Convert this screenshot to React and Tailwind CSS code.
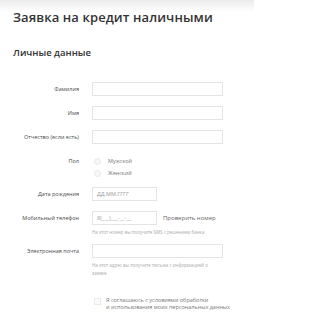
import React from "react";

const Field = ({ label, children, className = "" }) => (
  <div className={`flex ${className}`}>
    <div className="w-[79px] shrink-0 text-right text-[5.5px] leading-[14px] text-[#4a4a4a]">
      {label}
    </div>
    <div className="ml-[13px] flex-1">{children}</div>
  </div>
);

const Input = ({ w = "w-[131px]", placeholder }) => (
  <div
    className={`${w} h-[14px] border border-[#e4e4e4] bg-white px-[4px] text-[5.5px] leading-[12px] text-[#999]`}
  >
    {placeholder}
  </div>
);

const Radio = ({ label }) => (
  <div className="flex items-center h-[12px]">
    <span className="w-[7px] h-[7px] rounded-full border border-[#e8e8e8] bg-[#f7f7f7]" />
    <span className="ml-[7px] text-[5.5px] text-[#777]">{label}</span>
  </div>
);

export default function App() {
  return (
    <div
      className="w-[254px] h-[320px] overflow-hidden bg-[linear-gradient(to_bottom,#ebebeb_0px,#ffffff_12px)] text-[#333]"
      style={{ fontFamily: '"Open Sans", "Liberation Sans", sans-serif' }}
    >
      <div className="pl-[13px] pt-[9px]">
        <h1 className="text-[13px] leading-[16px] font-semibold text-[#333] tracking-[0.1px]">
          Заявка на кредит наличными
        </h1>
        <h2 className="mt-[22px] text-[9.5px] leading-[12px] font-semibold text-[#333]">
          Личные данные
        </h2>
      </div>

      <div className="mt-[23px]">
        <Field label="Фамилия">
          <Input />
        </Field>
        <Field label="Имя" className="mt-[10px]">
          <Input />
        </Field>
        <Field label="Отчество (если есть)" className="mt-[10px]">
          <Input />
        </Field>
        <Field label="Пол" className="mt-[10px]">
          <div className="pt-[1px] pl-[2px]">
            <Radio label="Мужской" />
            <Radio label="Женский" />
          </div>
        </Field>
        <Field label="Дата рождения" className="mt-[8px]">
          <Input w="w-[65px]" placeholder="ДД.ММ.ГГГГ" />
        </Field>
        <Field label="Мобильный телефон" className="mt-[10px]">
          <div className="flex items-center">
            <Input w="w-[65px]" placeholder="8(___)___-__-__" />
            <span className="ml-[6px] text-[6px] text-[#666]">Проверить номер</span>
          </div>
          <div className="mt-[3px] text-[4.5px] leading-[8px] text-[#aaa]">
            На этот номер вы получите SMS с решением банка
          </div>
        </Field>
        <Field label="Электронная почта" className="mt-[8px]">
          <Input />
          <div className="mt-[3px] w-[126px] text-[4.5px] leading-[8px] text-[#aaa]">
            На этот адрес вы получите письма с информацией о заявке
          </div>
        </Field>
        <div className="mt-[20px] ml-[94px] flex">
          <span className="mt-[1px] w-[7px] h-[7px] shrink-0 border border-[#ebebeb] bg-[#fafafa]" />
          <div className="ml-[5px] text-[5.5px] leading-[7px] text-[#777]">
            Я соглашаюсь с условиями обработки
            <br />и использования моих персональных данных
          </div>
        </div>
      </div>
    </div>
  );
}
